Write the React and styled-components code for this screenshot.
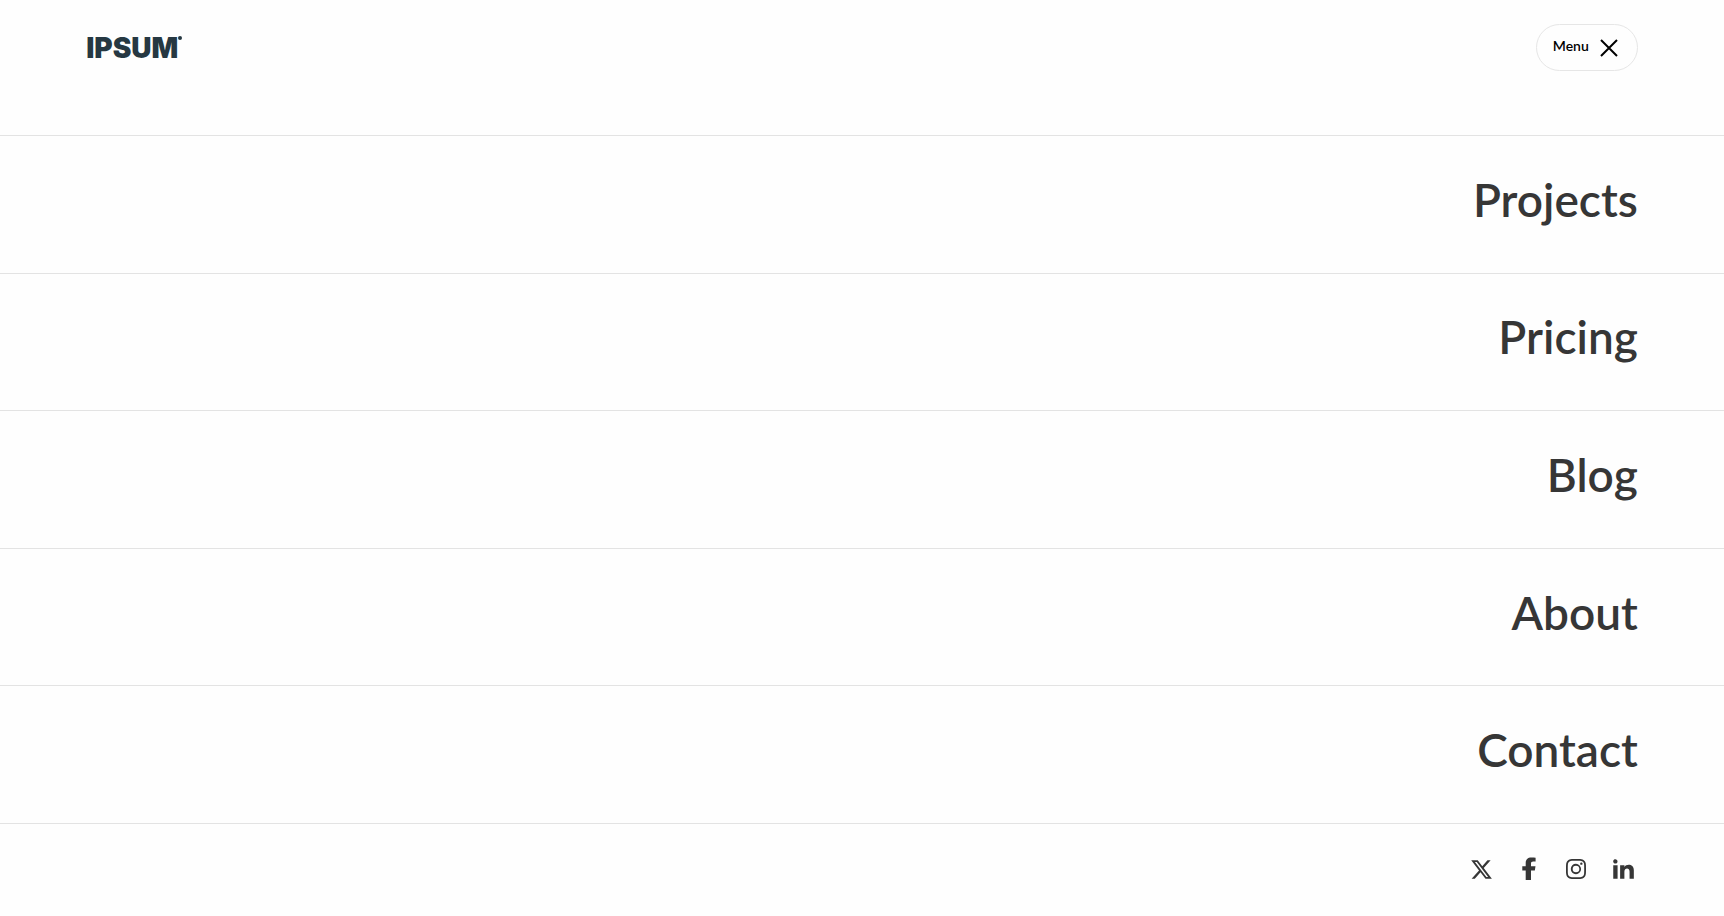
import React from 'react';
import styled, { createGlobalStyle } from 'styled-components';
import { FaXTwitter } from 'react-icons/fa6';
import { BsInstagram } from 'react-icons/bs';
import { RiLinkedinFill } from 'react-icons/ri';

const GlobalStyle = createGlobalStyle`
  * {
    box-sizing: border-box;
  }

  body {
    margin: 0;
    background: #fefefe;
    color: #363636;
    font-family: Lato, 'Open Sans', sans-serif;
  }
`

const Page = styled.div`
  display: flex;
  flex-direction: column;
  min-height: 100vh;
`

const Header = styled.header`
  display: flex;
  align-items: center;
  justify-content: space-between;
  padding: 24px 5% 64px;
`

const Logo = styled.a`
  position: relative;
  color: #263842;
  font: 900 28px/46px Inter, sans-serif;
  text-decoration: none;

  &::after {
    content: '';
    position: absolute;
    top: 11px;
    right: -4px;
    width: 4px;
    height: 4px;
    border-radius: 50%;
    background: currentColor;
  }
`

const MenuButton = styled.button`
  display: flex;
  align-items: center;
  gap: 8px;
  height: 47px;
  padding: 0 16px;
  border: 1px solid #e6e6e6;
  border-radius: 24px;
  background: #fefefe;
  color: #000;
  font: 600 14px/20px Lato, sans-serif;
  cursor: pointer;
`

const MenuLabel = styled.span`
  padding-bottom: 3px;
`

const Nav = styled.nav`
  display: flex;
  flex: 1;
`

const Links = styled.ul`
  display: flex;
  flex: 1;
  flex-direction: column;
  margin: 0;
  padding: 0;
  border-top: 1px solid #e3e3e3;
  list-style: none;
`

const Row = styled.li`
  display: flex;
  flex: 1;
  border-bottom: 1px solid #e3e3e3;
`

const NavLink = styled.a`
  display: flex;
  flex: 1;
  align-items: center;
  justify-content: flex-end;
  padding: 24px 5% 33px;
  color: inherit;
  font-size: 46px;
  font-weight: 600;
  line-height: 56px;
  text-decoration: none;
`

const Footer = styled.footer`
  display: flex;
  justify-content: flex-end;
  gap: 17px;
  padding: 30px 5% 32px;
`

const SocialLink = styled.a`
  display: flex;
  align-items: center;
  justify-content: center;
  width: 30px;
  height: 30px;
  color: inherit;
`

const CloseIcon = () => (
  <svg width="24" height="24" viewBox="0 0 24 24" fill="none" stroke="currentColor" strokeWidth="2" aria-hidden="true">
    <path d="M4 4l16 16M20 4L4 20" />
  </svg>
)

const FacebookIcon = ({ size }) => (
  <svg width={size} height={size} viewBox="0 0 24 24" fill="currentColor" aria-hidden="true">
    <path d="M18.6.8v3.8h-2.4c-1.6 0-2.2.8-2.2 2.2v2.5h4.5l-.7 4.1H14V23H8.7v-9.6H5.3V9.3h3.4V6.2C8.7 2.6 10.8.6 14.4.6c1.5 0 3 .1 4.2.2z" />
  </svg>
)

const pages = ['Projects', 'Pricing', 'Blog', 'About', 'Contact']

const socials = [
  { name: 'X', Icon: FaXTwitter, size: 23 },
  { name: 'Facebook', Icon: FacebookIcon, size: 24 },
  { name: 'Instagram', Icon: BsInstagram, size: 20 },
  { name: 'LinkedIn', Icon: RiLinkedinFill, size: 26 },
]

export default class App extends React.Component {
  render() {
    return (
      <Page>
        <GlobalStyle />
        <Header>
          <Logo href="#">IPSUM</Logo>
          <MenuButton type="button" aria-expanded="true">
            <MenuLabel>Menu</MenuLabel>
            <CloseIcon />
          </MenuButton>
        </Header>
        <Nav>
          <Links>
            {pages.map(page => (
              <Row key={page}>
                <NavLink href={`#${page.toLowerCase()}`}>{page}</NavLink>
              </Row>
            ))}
          </Links>
        </Nav>
        <Footer>
          {socials.map(({ name, Icon, size }) => (
            <SocialLink key={name} href={`#${name.toLowerCase()}`} aria-label={name}>
              <Icon size={size} />
            </SocialLink>
          ))}
        </Footer>
      </Page>
    )
  }
}
